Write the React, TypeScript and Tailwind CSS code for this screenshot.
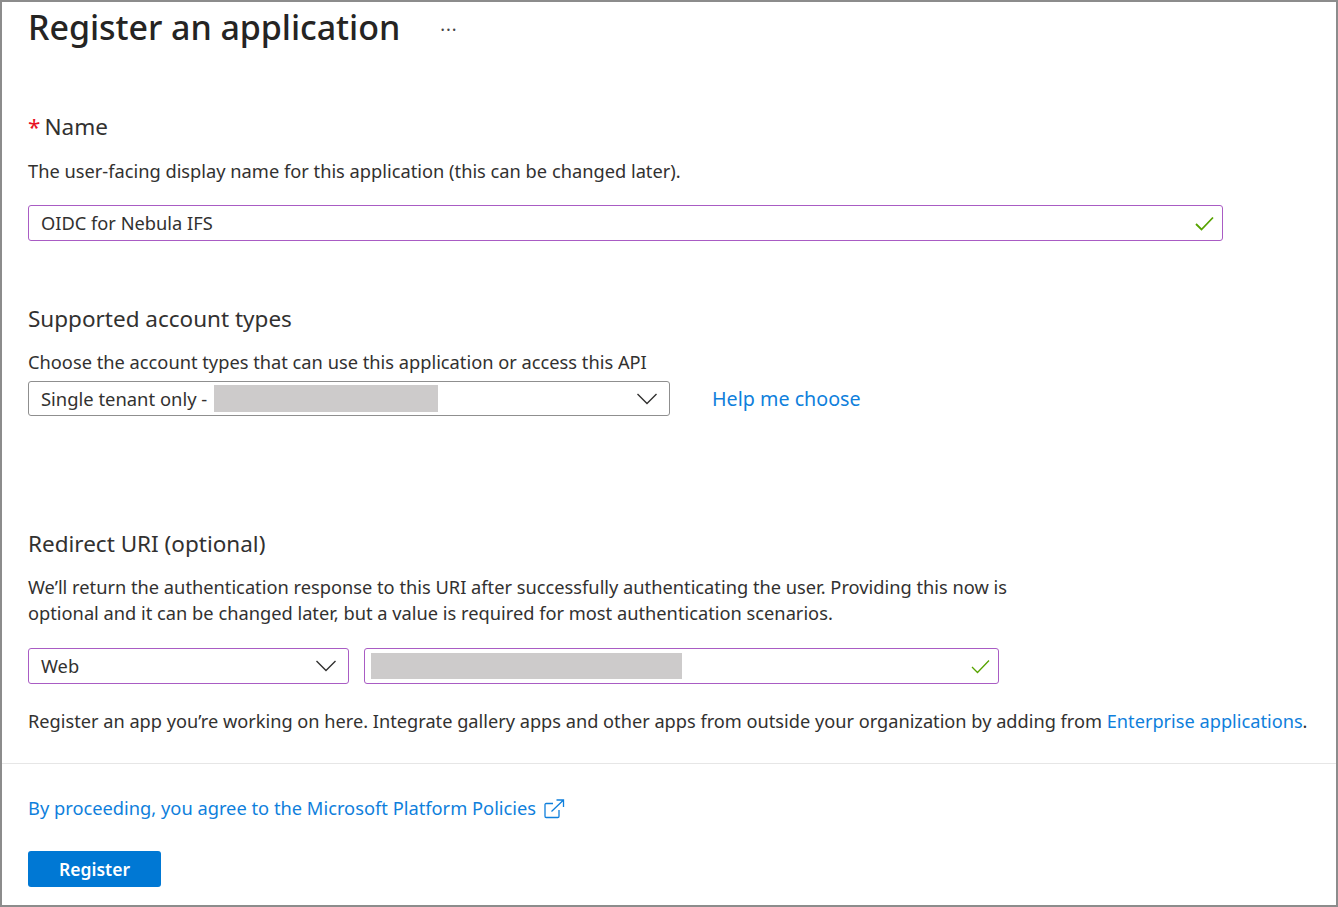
import React from 'react';

const Redacted = ({ className }: { className: string }) => <div className={`bg-[#cdcbcb] ${className}`} />;

const ExternalIcon = () => (
  <svg width="21" height="20" viewBox="0 0 21 20" fill="none" stroke="#0f7fdc" strokeWidth="1.3" className="ml-[8px] mt-[2px]">
    <path d="M9 4.5H2.2C1.5 4.5 1 5 1 5.7v11.6c0 .7.5 1.2 1.2 1.2h11.6c.7 0 1.2-.5 1.2-1.2V11" />
    <path d="M7.5 12.5L19.5 1M12.5 1h7v7" />
  </svg>
);

const Chevron = () => (
  <svg width="20" height="12" viewBox="0 0 20 12" fill="none" stroke="#323130" strokeWidth="1.4">
    <path d="M.5 1L10 10.5L19.5 1" />
  </svg>
);

const Tick = ({ weight }: { weight: number }) => (
  <svg width="19" height="15" viewBox="0 0 19 15" fill="none" stroke="#57a300" strokeWidth={weight}>
    <path d="M1 8L6.5 13.5L18 1.5" />
  </svg>
);

export default function App() {
  return (
    <div className="w-[1338px] h-[907px] bg-white border-2 border-[#8c8c8c] overflow-hidden font-['Noto_Sans',sans-serif] text-[#323130]">
      <div className="pl-[26px] pt-[2px]">
        <div className="flex items-center h-[46px]">
          <h1 className="text-[34px] leading-[46px] font-medium text-[#252423] tracking-[-0.06px]">Register an application</h1>
          <span className="ml-[40px] mt-[4px] text-[#444] text-[18px] leading-none tracking-[1px]">···</span>
        </div>

        <div className="mt-[62px] flex items-center h-[30px] text-[22.5px] leading-[30px]">
          <span className="text-[#e81123] mr-[4px]">*</span>
          <span>Name</span>
        </div>
        <p className="mt-[16px] text-[18.25px] leading-[26px]">The user-facing display name for this application (this can be changed later).</p>
        <div className="mt-[21px] w-[1195px] h-[36px] border border-[#a95cc4] rounded-[3px] flex items-center justify-between pl-[12px] pr-[8px] text-[18.25px]">
          <span>OIDC for Nebula IFS</span>
          <Tick weight={1.8} />
        </div>

        <h2 className="mt-[63px] text-[22.5px] leading-[30px] font-normal">Supported account types</h2>
        <p className="mt-[15px] text-[18.25px] leading-[26px]">Choose the account types that can use this application or access this API</p>
        <div className="mt-[6px] flex items-center">
          <div className="w-[642px] h-[35px] border border-[#8f8f8f] rounded-[3px] flex items-center pl-[12px] pr-[12px] text-[18.4px]">
            <span>Single tenant only -</span>
            <Redacted className="ml-[7px] w-[224px] h-[27px]" />
            <span className="ml-auto"><Chevron /></span>
          </div>
          <a className="ml-[42px] text-[19.7px] text-[#0f7fdc]">Help me choose</a>
        </div>

        <h2 className="mt-[113px] text-[22.5px] leading-[30px] font-normal">Redirect URI (optional)</h2>
        <p className="mt-[15px] text-[18.25px] leading-[26px]">
          We’ll return the authentication response to this URI after successfully authenticating the user. Providing this now is
          <br />
          optional and it can be changed later, but a value is required for most authentication scenarios.
        </p>
        <div className="mt-[22px] flex gap-[15px]">
          <div className="w-[321px] h-[36px] border border-[#a95cc4] rounded-[3px] flex items-center justify-between pl-[12px] pr-[12px] text-[18.25px]">
            <span>Web</span>
            <Chevron />
          </div>
          <div className="w-[635px] h-[36px] border border-[#a95cc4] rounded-[3px] flex items-center justify-between pl-[6px] pr-[8px]">
            <Redacted className="w-[311px] h-[26px]" />
            <Tick weight={1.3} />
          </div>
        </div>
        <p className="mt-[24px] text-[18.2px] leading-[26px] whitespace-nowrap">
          Register an app you’re working on here. Integrate gallery apps and other apps from outside your organization by adding from{' '}
          <a className="text-[#0f7fdc]">Enterprise applications</a>.
        </p>
      </div>

      <div className="mt-[29px] border-t border-[#e6e6e6] pl-[26px]">
        <div className="mt-[31px] flex items-center text-[18.3px] leading-[26px] text-[#0f7fdc]">
          <a>By proceeding, you agree to the Microsoft Platform Policies</a>
          <ExternalIcon />
        </div>
        <button className="mt-[30px] w-[133px] h-[36px] bg-[#0078d4] rounded-[3px] text-white text-[17.5px] font-semibold flex items-center justify-center">Register</button>
      </div>
    </div>
  );
}
